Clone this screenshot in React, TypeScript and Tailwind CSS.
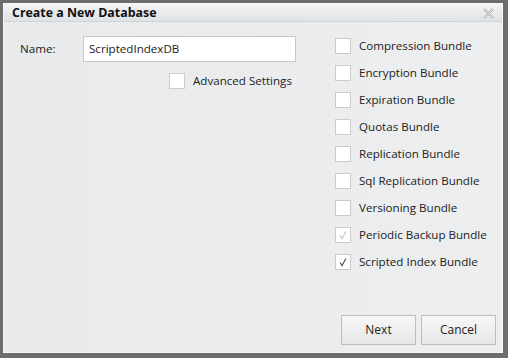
import React from "react";

const font = { fontFamily: '"Open Sans", "Segoe UI", sans-serif' };

function Box({ checked, disabled }: { checked?: boolean; disabled?: boolean }) {
  return (
    <div className="w-4 h-4 border border-[#c9cccf] bg-white flex items-center justify-center shrink-0">
      {checked && (
        <svg width="12" height="12" viewBox="0 0 12 12">
          <path
            d="M3 6.5 L5 9.5 L9 2.5"
            fill="none"
            stroke={disabled ? "#c8c8c8" : "#555"}
            strokeWidth="1.2"
          />
        </svg>
      )}
    </div>
  );
}

const bundles: { label: string; checked?: boolean; disabled?: boolean }[] = [
  { label: "Compression Bundle" },
  { label: "Encryption Bundle" },
  { label: "Expiration Bundle" },
  { label: "Quotas Bundle" },
  { label: "Replication Bundle" },
  { label: "Sql Replication Bundle" },
  { label: "Versioning Bundle" },
  { label: "Periodic Backup Bundle", checked: true, disabled: true },
  { label: "Scripted Index Bundle", checked: true },
];

export default function App() {
  return (
    <div
      className="w-[508px] h-[358px] bg-[#6d6d6d] border-l-[3px] border-t-[3px] border-r-[5px] border-b-[5px] border-[#6d6d6d] text-[11.6px] text-[#222]"
      style={font}
    >
      <div className="w-full h-full border border-[#f6f7f8] flex flex-col bg-[#e9ebed]">
        <div className="h-[18px] flex items-center justify-between pl-[8px] pr-[8px] pt-[2px] bg-gradient-to-b from-[#f3f4f5] to-[#dfe2e5] border-b border-[#d0d4d8]">
          <span className="font-bold text-[12.4px] text-[#111] leading-none">Create a New Database</span>
          <svg width="11" height="11" viewBox="0 0 11 11">
            <path d="M1 1 L10 10 M10 1 L1 10" stroke="#b0b0b0" strokeWidth="2.2" />
            <path d="M1 1 L10 10 M10 1 L1 10" stroke="#f0f0f0" strokeWidth="0.8" />
          </svg>
        </div>
        <div className="flex-1 flex flex-col bg-gradient-to-r from-[#e8eaec] to-[#eceef0]">
          <div className="flex flex-1">
            <div className="w-[331px] pl-[16px] pt-[14px]">
              <div className="flex items-center">
                <span className="w-[63px] text-[#222]">Name:</span>
                <div className="w-[213px] h-[26px] bg-white border border-[#c6c9cc] flex items-center pl-[5px] text-[#222]">
                  ScriptedIndexDB
                </div>
              </div>
              <div className="flex items-center mt-[10px] pl-[149px] gap-[8px]">
                <Box />
                <span>Advanced Settings</span>
              </div>
            </div>
            <div className="pt-[16px] flex flex-col gap-[11px]">
              {bundles.map((b) => (
                <div key={b.label} className="flex items-center gap-[8px] h-4">
                  <Box checked={b.checked} disabled={b.disabled} />
                  <span>{b.label}</span>
                </div>
              ))}
            </div>
          </div>
          <div className="flex justify-end gap-[5px] pr-[6px] pb-[7px]">
            <button className="w-[75px] h-[30px] border border-[#c4b9bf] bg-gradient-to-b from-[#f7f7f7] to-[#e6e6e6] text-[#222] text-[12px]">
              Next
            </button>
            <button className="w-[75px] h-[30px] border border-[#c4b9bf] bg-gradient-to-b from-[#f7f7f7] to-[#e6e6e6] text-[#222] text-[12px]">
              Cancel
            </button>
          </div>
        </div>
      </div>
    </div>
  );
}
